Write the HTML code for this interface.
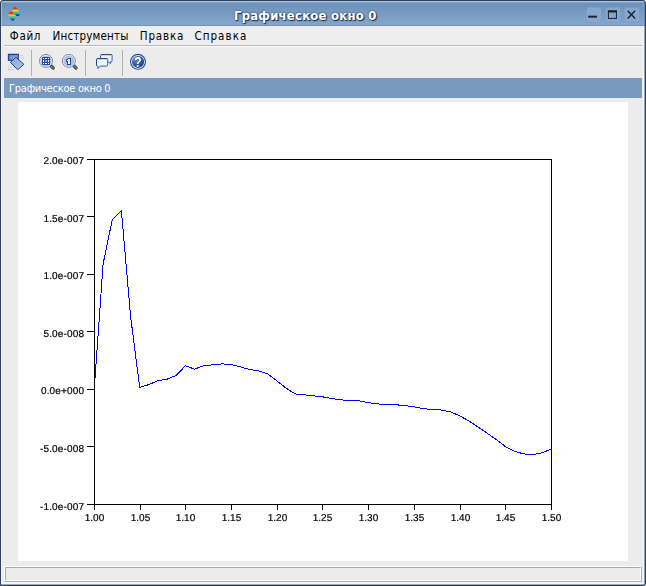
<!DOCTYPE html>
<html lang="ru"><head><meta charset="utf-8"><title>Графическое окно 0</title>
<style>
html,body{margin:0;padding:0;background:#fff;}
body{width:646px;height:586px;position:relative;overflow:hidden;font-family:"DejaVu Sans Condensed","Liberation Sans",sans-serif;}
.abs{position:absolute;}
#win{position:absolute;left:0;top:0;width:646px;height:586px;border-radius:3px 3px 2px 0;background:#ececec;overflow:hidden;}
#frame{position:absolute;left:0;top:0;width:646px;height:586px;box-sizing:border-box;border:1px solid #2e405a;border-radius:3px 3px 2px 0;}
#tb{position:absolute;left:0;top:0;width:646px;height:26px;background:linear-gradient(#a6bfdc 0,#a6bfdc 2px,#86a6cb 2px,#86a6cb 3px,#6c91ba 3px,#84a6c9 24px,#84a6c9 25px,#7095be 25px,#7095be 26px);}
#title{position:absolute;left:234px;top:8px;letter-spacing:0.22px;color:#fff;font-weight:bold;font-size:13px;line-height:16px;text-shadow:1px 1px 1px #1c2b44,0 0 2px #2a3b58;white-space:nowrap;}
.wb{position:absolute;top:7px;width:14px;height:14px;border:1px solid #7d9ec6;border-radius:3px;background:#87a8cc;}
#menu{position:absolute;left:1px;top:27px;width:644px;height:19px;background:#eeeeee;font-size:11.5px;line-height:19px;color:#000;}
#menu span{position:absolute;top:0;white-space:nowrap;}
.sep{position:absolute;width:1px;background:#b0b0b0;top:50px;height:26px;}
#bar{position:absolute;left:4px;top:78px;width:638px;height:20px;background:#789ac1;color:#fff;font-size:11px;line-height:22px;}
#canvas{position:absolute;left:18px;top:102px;width:610px;height:459px;background:#fff;}
</style></head><body>
<div id="win">
 <div id="tb"></div>
 <div class="abs" style="left:1px;top:1px;width:1px;height:25px;background:#a0bad8"></div>
 <svg class="abs" style="left:7px;top:6px" width="16" height="17" viewBox="0 0 16 17">
  <defs><linearGradient id="rb" x1="0" y1="0" x2="0" y2="1"><stop offset="0" stop-color="#c8141e"/><stop offset="0.18" stop-color="#f03a10"/><stop offset="0.38" stop-color="#f6d020"/><stop offset="0.55" stop-color="#58d060"/><stop offset="0.72" stop-color="#18b0e0"/><stop offset="0.88" stop-color="#1030d0"/><stop offset="1" stop-color="#0a1490"/></linearGradient></defs>
  <path d="M7.7 1.1 C9.4 0.9 11.4 4.2 13.1 8.2 C12 9.6 10.8 10.2 9.6 10 C8.2 8.4 6 6 5 4.6 C5.6 3 6.8 1.4 7.7 1.1Z" fill="url(#rb)"/>
  <path d="M3.8 5.8 C5.2 5.4 7 7.4 8.5 10 C8.2 12.4 7 14.4 5.8 14.7 C4.4 14.8 2 11.6 1 8.8 C1.6 7.4 2.8 6 3.8 5.8Z" fill="url(#rb)"/>
 </svg>
 <div id="title">Графическое окно 0</div>
 <div class="wb" style="left:586px"></div><div class="wb" style="left:605px"></div><div class="wb" style="left:624px"></div>
 <svg class="abs" style="left:586px;top:7px" width="56" height="16" viewBox="0 0 56 16">
  <rect x="2.2" y="8.7" width="8.8" height="1.9" fill="#16202e"/>
  <rect x="22.4" y="4" width="8" height="7.4" fill="none" stroke="#16202e" stroke-width="1"/><rect x="21.9" y="3.5" width="9" height="2" fill="#16202e"/>
  <path d="M41.7 3.8 L49.1 11.4 M49.1 3.8 L41.7 11.4" stroke="#16202e" stroke-width="1.4" fill="none"/>
 </svg>
 <div id="menu"><span style="left:8.8px;letter-spacing:0.7px">Файл</span><span style="left:51.6px;letter-spacing:0.18px">Инструменты</span><span style="left:138.8px;letter-spacing:0.85px">Правка</span><span style="left:193.4px;letter-spacing:1.05px">Справка</span></div>
 <div class="abs" style="left:4px;top:45px;width:638px;height:1px;background:#b8b8b8"></div>
 <div class="abs" style="left:4px;top:46px;width:638px;height:1px;background:#fbfbfb"></div>
 <div class="sep" style="left:31px"></div><div class="sep" style="left:85px"></div><div class="sep" style="left:122px"></div>
 <svg class="abs" style="left:0;top:46px;will-change:transform" width="160" height="30" viewBox="0 46 160 30">
  <defs>
   <linearGradient id="bf" x1="0" y1="0" x2="1" y2="1"><stop offset="0" stop-color="#5a80c4"/><stop offset="1" stop-color="#a8bce0"/></linearGradient><linearGradient id="bf2" x1="0" y1="0" x2="1" y2="1"><stop offset="0" stop-color="#88a2d4"/><stop offset="1" stop-color="#b4c6e6"/></linearGradient>
   <radialGradient id="lens" cx="0.4" cy="0.35" r="0.8"><stop offset="0" stop-color="#b4cced"/><stop offset="1" stop-color="#9ab8e2"/></radialGradient>
   <radialGradient id="hq" cx="0.3" cy="0.25" r="0.85"><stop offset="0" stop-color="#6f92cc"/><stop offset="0.6" stop-color="#2f569e"/><stop offset="1" stop-color="#1c3f86"/></radialGradient>
  </defs>
  <!-- rotate icon -->
  <path d="M19.6 55.8 q3.6 0 3.4 3.4" stroke="#b9c9e4" stroke-width="2.2" fill="none"/>
  <path d="M19.6 55.8 q3.6 0 3.4 3.4" stroke="#fbfcfe" stroke-width="1" fill="none"/>
  <path d="M9 65.6 v3 h5.4" stroke="#b9c9e4" stroke-width="2.2" fill="none"/>
  <path d="M9 65.6 v3 h5.4" stroke="#fbfcfe" stroke-width="1" fill="none"/>
  <path d="M6.8 66.4 L9 63.8 L11.2 66.4Z" fill="#dde6f4"/>
  <rect x="8.5" y="54.4" width="9.8" height="5.8" fill="url(#bf)" stroke="#1a449c" stroke-width="1.3"/>
  <path d="M15.9 57.3 L23.9 64.3 L17.8 69.7 L10.3 62.4 Z" fill="url(#bf2)" stroke="#1a449c" stroke-width="1" stroke-linejoin="round"/>
  <!-- zoom grid -->
  <g>
   <path d="M51.2 66 L53.2 68" stroke="#4c5056" stroke-width="3.4" stroke-linecap="round"/>
   <path d="M51.6 66.4 L53 67.8" stroke="#74787e" stroke-width="1.2" stroke-linecap="round"/>
   <circle cx="46" cy="60.9" r="6.5" fill="#f2f5fa" stroke="#7c8696" stroke-width="1"/>
   <circle cx="46" cy="60.9" r="5.4" fill="url(#lens)"/>
   <rect x="42" y="57" width="8" height="8" fill="#2a4e9f"/>
   <g fill="#f6f8fd"><rect x="43" y="58" width="1" height="1"/><rect x="45" y="58" width="2" height="1"/><rect x="48" y="58" width="1" height="1"/><rect x="43" y="60" width="1" height="2"/><rect x="48" y="60" width="1" height="2"/><rect x="43" y="63" width="1" height="1"/><rect x="45" y="63" width="2" height="1"/><rect x="48" y="63" width="1" height="1"/></g>
   <rect x="45" y="60" width="2" height="2" fill="#86a2e2"/>
  </g>
  <g>
   <path d="M74 66 L76 68" stroke="#4c5056" stroke-width="3.4" stroke-linecap="round"/>
   <path d="M74.4 66.4 L75.8 67.8" stroke="#74787e" stroke-width="1.2" stroke-linecap="round"/>
   <circle cx="68.8" cy="60.9" r="6.5" fill="#f2f5fa" stroke="#7c8696" stroke-width="1"/>
   <circle cx="68.8" cy="60.9" r="5.4" fill="url(#lens)"/>
   <path d="M68 58h3v7h-4v-3.2h-1v-2.6h1z" fill="#24489a"/><rect x="68" y="59" width="2" height="5" fill="#fff"/><rect x="67" y="60" width="1" height="1" fill="#fff"/>
  </g>
  <!-- bubbles -->
  <path d="M101.5 54.5h9.6a1 1 0 0 1 1 1v5.2a1 1 0 0 1 -1 1h-.6v2l-2.2-2h-6.8a1 1 0 0 1 -1 -1v-5.2a1 1 0 0 1 1 -1z" fill="#f3f4f7" stroke="#3a62b0" stroke-width="1"/>
  <rect x="101" y="54" width="10.6" height="1.2" fill="#1f4a9e"/>
  <path d="M97.5 58.5h9.2a1 1 0 0 1 1 1v5.6a1 1 0 0 1 -1 1h-6.5l-2.2 2.6v-2.6h-.5a1 1 0 0 1 -1 -1v-5.6a1 1 0 0 1 1 -1z" fill="#f3f4f7" stroke="#3a62b0" stroke-width="1"/>
  <rect x="97" y="58" width="10.2" height="1.2" fill="#1f4a9e"/>
  <rect x="96" y="59.2" width="1" height="6.2" fill="#1f4a9e"/>
  <!-- help -->
  <circle cx="138" cy="61.8" r="8" fill="#234c98"/>
  <circle cx="138" cy="61.8" r="6.9" fill="#eef2f9"/>
  <circle cx="138" cy="61.8" r="6.1" fill="url(#hq)"/>
  <text transform="translate(138 67) scale(0.86 1)" x="0" y="0" text-anchor="middle" font-family="Liberation Sans,sans-serif" font-weight="bold" font-size="14" fill="#fff">?</text>
 </svg>
 <div id="bar"><span style="position:absolute;left:5px;top:0;white-space:nowrap;letter-spacing:-0.25px">Графическое окно 0</span></div>
 <div id="canvas"></div>
 <svg class="abs" style="left:0;top:0;will-change:transform" width="646" height="586" viewBox="0 0 646 586" font-family="Liberation Sans,sans-serif" font-size="10" fill="#000" stroke="none" shape-rendering="crispEdges">
  <polyline points="94.0,393.0 103.1,264.0 112.3,219.5 121.4,210.5 130.6,316.5 139.7,387.5 148.8,384.6 158.0,380.6 167.1,379.2 176.3,375.3 185.4,365.8 194.5,369.1 203.7,365.8 212.8,364.8 222.0,363.9 231.1,364.5 240.2,366.8 249.4,369.5 258.5,370.8 267.7,373.9 276.8,380.8 285.9,388.0 295.1,393.9 304.2,394.8 313.4,395.8 322.5,396.8 331.6,398.6 340.8,399.7 349.9,400.8 359.1,400.8 368.2,402.6 377.3,403.8 386.5,404.7 395.6,404.7 404.8,405.7 413.9,406.7 423.0,408.6 432.2,409.6 441.3,410.0 450.5,411.9 459.6,415.8 468.7,420.8 477.9,427.0 487.0,433.1 496.2,439.5 505.3,446.5 514.4,451.3 523.6,453.9 532.7,454.6 541.9,452.8 551.0,449.2" fill="none" stroke="#0000ff" stroke-width="1" shape-rendering="crispEdges"/>
  <rect x="94.5" y="159.5" width="457" height="345" fill="none" stroke="#000" stroke-width="1"/>
  <rect x="94" y="505" width="1" height="5"/>
  <rect x="140" y="505" width="1" height="5"/>
  <rect x="185" y="505" width="1" height="5"/>
  <rect x="231" y="505" width="1" height="5"/>
  <rect x="277" y="505" width="1" height="5"/>
  <rect x="322" y="505" width="1" height="5"/>
  <rect x="368" y="505" width="1" height="5"/>
  <rect x="414" y="505" width="1" height="5"/>
  <rect x="460" y="505" width="1" height="5"/>
  <rect x="505" y="505" width="1" height="5"/>
  <rect x="551" y="505" width="1" height="5"/>
  <rect x="87" y="159" width="7" height="1"/>
  <rect x="87" y="216" width="7" height="1"/>
  <rect x="87" y="274" width="7" height="1"/>
  <rect x="87" y="331" width="7" height="1"/>
  <rect x="87" y="389" width="7" height="1"/>
  <rect x="87" y="446" width="7" height="1"/>
  <rect x="87" y="504" width="7" height="1"/>
  <g text-rendering="geometricPrecision" stroke="#000" stroke-width="0.2"><text x="94.5" y="521" text-anchor="middle">1.00</text>
  <text x="140.5" y="521" text-anchor="middle">1.05</text>
  <text x="185.5" y="521" text-anchor="middle">1.10</text>
  <text x="231.5" y="521" text-anchor="middle">1.15</text>
  <text x="277.5" y="521" text-anchor="middle">1.20</text>
  <text x="322.5" y="521" text-anchor="middle">1.25</text>
  <text x="368.5" y="521" text-anchor="middle">1.30</text>
  <text x="414.5" y="521" text-anchor="middle">1.35</text>
  <text x="460.5" y="521" text-anchor="middle">1.40</text>
  <text x="505.5" y="521" text-anchor="middle">1.45</text>
  <text x="551.5" y="521" text-anchor="middle">1.50</text>
  <text x="84.2" y="164.0" text-anchor="end" letter-spacing="0.16">2.0e-007</text>
  <text x="84.2" y="222.0" text-anchor="end" letter-spacing="0.16">1.5e-007</text>
  <text x="84.2" y="279.0" text-anchor="end" letter-spacing="0.16">1.0e-007</text>
  <text x="84.2" y="337.0" text-anchor="end" letter-spacing="0.16">5.0e-008</text>
  <text x="84.2" y="394.0" text-anchor="end" letter-spacing="0.16">0.0e+000</text>
  <text x="84.2" y="452.0" text-anchor="end" letter-spacing="0.16">-5.0e-008</text>
  <text x="84.2" y="510.0" text-anchor="end" letter-spacing="0.16">-1.0e-007</text></g>
 </svg>
 <!-- status bar -->
 <div class="abs" style="left:4px;top:566px;width:637px;height:15px;border-top:1px solid #fff;border-left:1px solid #fff;border-right:1px solid #b0b0b0;border-bottom:1px solid #b0b0b0;box-sizing:border-box;width:638px;height:16px;"></div>
 <div class="abs" style="left:5px;top:567px;box-sizing:border-box;width:636px;height:14px;border-top:1px solid #a8a8a8;border-left:1px solid #a8a8a8;border-right:1px solid #fff;border-bottom:1px solid #fff;"></div>
</div>
<div class="abs" style="left:642px;top:26px;width:2px;height:558px;background:#f2f2f3"></div>
<div class="abs" style="left:1px;top:582px;width:643px;height:2px;background:#f4f4f4"></div>
<div class="abs" style="left:1px;top:26px;width:1px;height:558px;background:#f0f1f1"></div>
<div class="abs" style="left:644px;top:26px;width:1px;height:559px;background:#98a3b2"></div>
<div class="abs" style="left:644px;top:2px;width:1px;height:24px;background:#6387b3"></div>
<div class="abs" style="left:1px;top:584px;width:644px;height:1px;background:#9ca6b4"></div>
<div id="frame"></div>
</body></html>
